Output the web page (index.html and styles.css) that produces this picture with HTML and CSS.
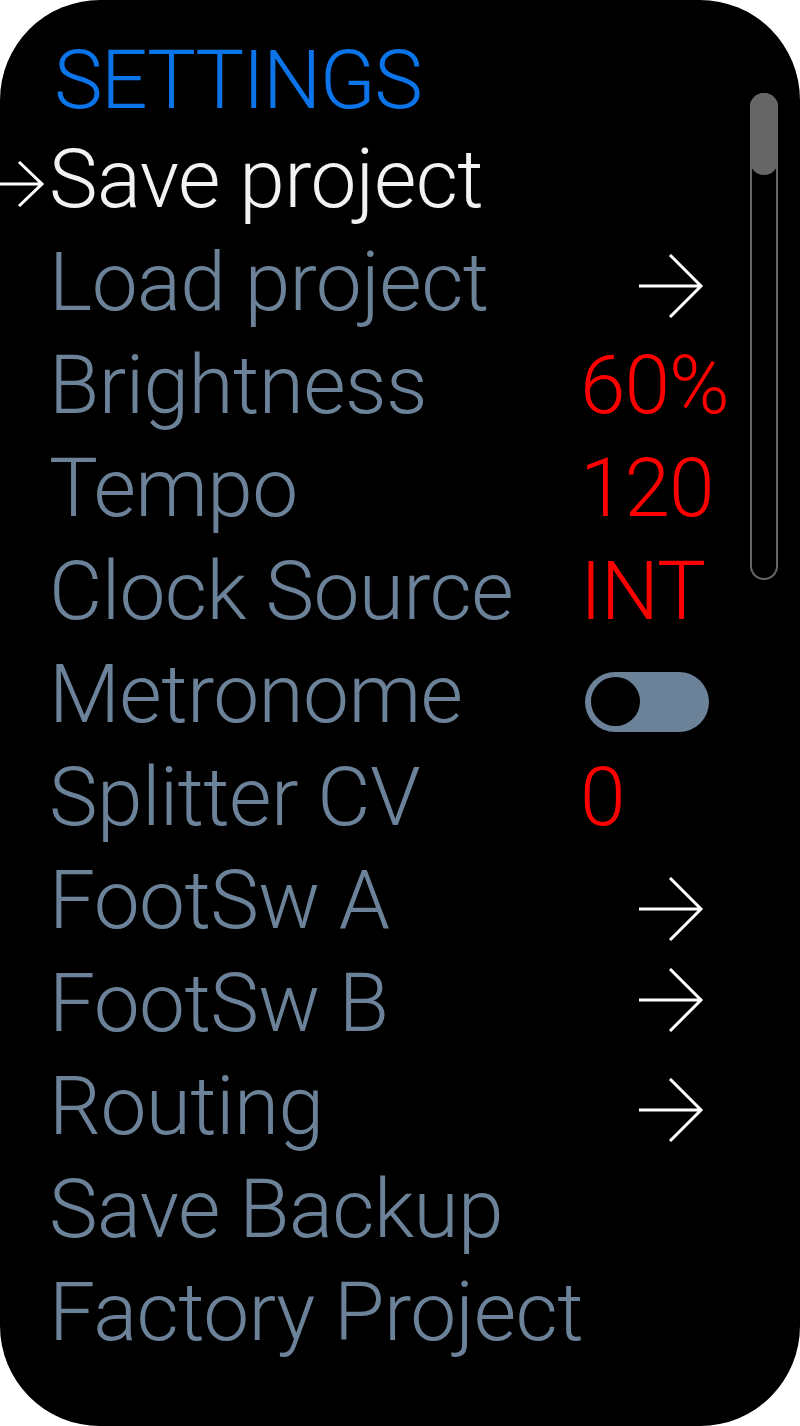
FILE: index.html
```html
<!DOCTYPE html>
<html lang="en">
<head>
    <meta charset="UTF-8">
    <meta name="viewport" content="width=device-width, initial-scale=1.0">
    <title>Settings</title>
    <link rel="stylesheet" href="styles.css">
</head>
<body>

    <div class="screen">
        <div class="menu">
            <h1 class="title">SETTINGS</h1>

            <div class="row selected">
                <svg class="cursor" width="46" height="46" viewBox="0 0 46 46">
                    <path d="M0 23 H42 M19 1 L42 23 L19 45" />
                </svg>
                <span class="label">Save project</span>
            </div>

            <div class="row">
                <span class="label">Load project</span>
                <svg class="arrow" width="66" height="64" viewBox="0 0 66 64">
                    <path d="M1 32 H63 M32 1 L63 32 L32 63" />
                </svg>
            </div>

            <div class="row">
                <span class="label">Brightness</span>
                <span class="value">60%</span>
            </div>

            <div class="row">
                <span class="label">Tempo</span>
                <span class="value">120</span>
            </div>

            <div class="row">
                <span class="label">Clock Source</span>
                <span class="value">INT</span>
            </div>

            <div class="row">
                <span class="label">Metronome</span>
                <div class="toggle"><div class="knob"></div></div>
            </div>

            <div class="row">
                <span class="label">Splitter CV</span>
                <span class="value">0</span>
            </div>

            <div class="row">
                <span class="label">FootSw A</span>
                <svg class="arrow lower" width="66" height="64" viewBox="0 0 66 64">
                    <path d="M1 32 H63 M32 1 L63 32 L32 63" />
                </svg>
            </div>

            <div class="row">
                <span class="label">FootSw B</span>
                <svg class="arrow higher" width="66" height="64" viewBox="0 0 66 64">
                    <path d="M1 32 H63 M32 1 L63 32 L32 63" />
                </svg>
            </div>

            <div class="row">
                <span class="label">Routing</span>
                <svg class="arrow" width="66" height="64" viewBox="0 0 66 64">
                    <path d="M1 32 H63 M32 1 L63 32 L32 63" />
                </svg>
            </div>

            <div class="row">
                <span class="label">Save Backup</span>
            </div>

            <div class="row">
                <span class="label">Factory Project</span>
            </div>
        </div>

        <div class="scrollbar">
            <div class="thumb"></div>
        </div>
    </div>

</body>
</html>
```

FILE: styles.css
```css
body {
    margin: 0;
    background-color: #fff;
    font-family: Roboto, "DejaVu Sans", sans-serif;
}

.screen {
    width: 800px;
    height: 1426px;
    box-sizing: border-box;
    padding: 30px 22px 0 49px;
    background-color: #000;
    border-radius: 100px;
    display: flex;
    overflow: hidden;
}

.menu {
    flex: 1;
}

.title {
    margin: 2px 0 0 5px;
    font-size: 82px;
    font-weight: 300;
    line-height: 96px;
    letter-spacing: -1.5px;
    color: #0b74e8;
}

.row {
    display: flex;
    align-items: center;
    height: 103px;
    font-size: 82px;
    font-weight: 300;
    line-height: 103px;
}

.label {
    width: 531px;
    flex-shrink: 0;
    color: #6b8299;
    white-space: nowrap;
    letter-spacing: -0.6px;
}

.selected .label {
    color: #f2f2f2;
}

.cursor {
    margin-left: -49px;
    margin-right: 3px;
    margin-top: 8px;
    flex-shrink: 0;
}

.cursor path,
.arrow path {
    fill: none;
    stroke: #fff;
    stroke-width: 3;
}

.arrow {
    margin-left: 58px;
    margin-top: 6px;
}

.arrow.lower {
    margin-top: 16px;
}

.arrow.higher {
    margin-top: -8px;
}

.value {
    color: #ff0000;
    white-space: nowrap;
    letter-spacing: -1px;
}

.toggle {
    width: 124px;
    height: 60px;
    margin-left: 5px;
    margin-top: 14px;
    border-radius: 30px;
    background-color: #6b8299;
    display: flex;
    align-items: center;
    padding-left: 6px;
    box-sizing: border-box;
}

.knob {
    width: 49px;
    height: 49px;
    border-radius: 50%;
    background-color: #000;
}

.scrollbar {
    width: 28px;
    height: 487px;
    margin-top: 63px;
    box-sizing: border-box;
    border: 2px solid #666;
    border-radius: 14px;
    flex-shrink: 0;
    position: relative;
}

.thumb {
    position: absolute;
    top: -2px;
    left: -2px;
    width: 28px;
    height: 82px;
    border-radius: 14px;
    background-color: #666;
}
```
